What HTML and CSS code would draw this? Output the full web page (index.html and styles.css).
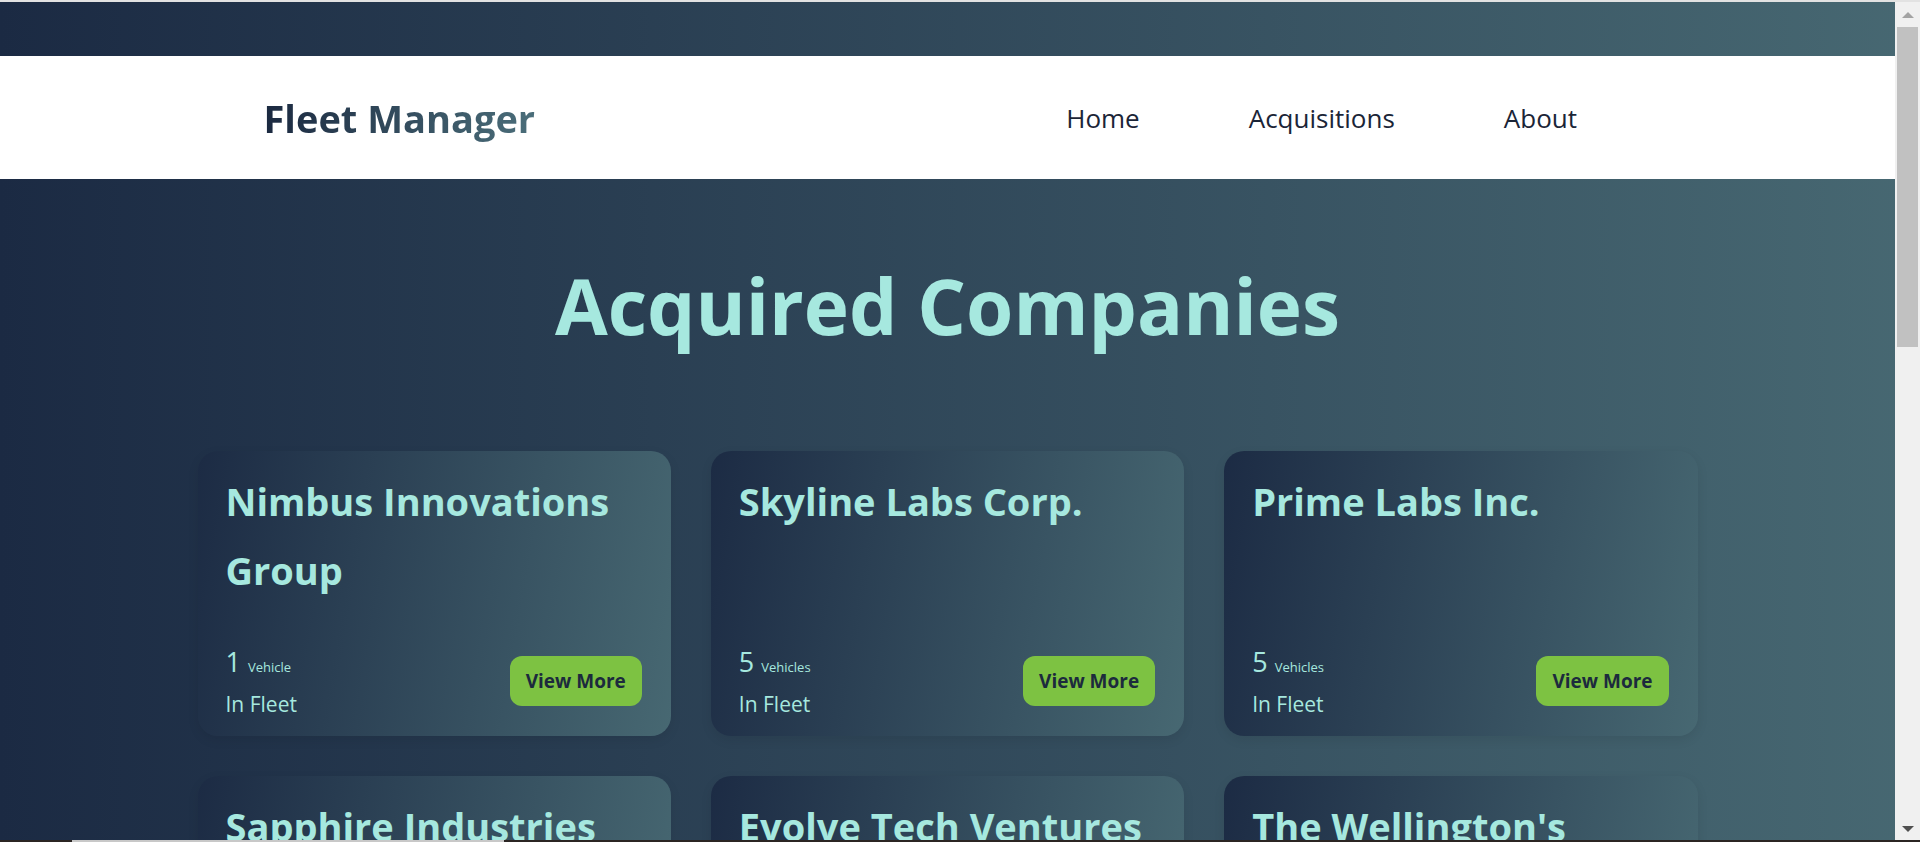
FILE: index.html
```html
<!DOCTYPE html>
<html lang="en">
<head>
<meta charset="utf-8">
<title>Fleet Manager</title>
<link rel="stylesheet" href="styles.css">
</head>
<body>
<header class="site-header">
  <nav class="navbar">
    <a class="logo" href="#">Fleet Manager</a>
    <ul class="nav-links">
      <li><a href="#">Home</a></li>
      <li><a href="#">Acquisitions</a></li>
      <li><a href="#">About</a></li>
    </ul>
  </nav>
</header>
<main class="content">
  <h1 class="page-title">Acquired Companies</h1>
  <section class="company-grid">
    <article class="company-card">
      <h2 class="company-name">Nimbus Innovations Group</h2>
      <div class="card-footer">
        <div class="fleet-info">
          <div class="fleet-count"><span class="count">1</span> <span class="unit">Vehicle</span></div>
          <div class="fleet-label">In Fleet</div>
        </div>
        <a class="btn" href="#">View More</a>
      </div>
    </article>
    <article class="company-card">
      <h2 class="company-name">Skyline Labs Corp.</h2>
      <div class="card-footer">
        <div class="fleet-info">
          <div class="fleet-count"><span class="count">5</span> <span class="unit">Vehicles</span></div>
          <div class="fleet-label">In Fleet</div>
        </div>
        <a class="btn" href="#">View More</a>
      </div>
    </article>
    <article class="company-card">
      <h2 class="company-name">Prime Labs Inc.</h2>
      <div class="card-footer">
        <div class="fleet-info">
          <div class="fleet-count"><span class="count">5</span> <span class="unit">Vehicles</span></div>
          <div class="fleet-label">In Fleet</div>
        </div>
        <a class="btn" href="#">View More</a>
      </div>
    </article>
    <article class="company-card">
      <h2 class="company-name">Sapphire Industries</h2>
      <div class="card-footer">
        <div class="fleet-info">
          <div class="fleet-count"><span class="count">3</span> <span class="unit">Vehicles</span></div>
          <div class="fleet-label">In Fleet</div>
        </div>
        <a class="btn" href="#">View More</a>
      </div>
    </article>
    <article class="company-card">
      <h2 class="company-name">Evolve Tech Ventures</h2>
      <div class="card-footer">
        <div class="fleet-info">
          <div class="fleet-count"><span class="count">2</span> <span class="unit">Vehicles</span></div>
          <div class="fleet-label">In Fleet</div>
        </div>
        <a class="btn" href="#">View More</a>
      </div>
    </article>
    <article class="company-card">
      <h2 class="company-name">The Wellington's</h2>
      <div class="card-footer">
        <div class="fleet-info">
          <div class="fleet-count"><span class="count">4</span> <span class="unit">Vehicles</span></div>
          <div class="fleet-label">In Fleet</div>
        </div>
        <a class="btn" href="#">View More</a>
      </div>
    </article>
  </section>
</main>
<div class="fake-scrollbar" aria-hidden="true">
  <span class="sb-arrow sb-up"></span>
  <span class="sb-thumb"></span>
  <span class="sb-arrow sb-down"></span>
</div>
<div class="fake-hscroll" aria-hidden="true"></div>
</body>
</html>
```

FILE: styles.css
```css
* {
  box-sizing: border-box;
}

html {
  border-top: 2px solid #e2e2e2;
}

body {
  margin: 0;
  padding: 54px 25px 0 0;
  min-height: 100vh;
  font-family: "Open Sans", "Noto Sans", sans-serif;
  background: linear-gradient(to right, #1b2a43 0%, #476872 100%);
}

.site-header {
  background: #ffffff;
}

.navbar {
  max-width: 1500px;
  height: 123px;
  margin: 0 auto;
  padding: 0 66px;
  display: flex;
  align-items: center;
  justify-content: space-between;
}

.logo {
  font-size: 38px;
  font-weight: 700;
  text-decoration: none;
  background: linear-gradient(to right, #1b2940 0%, #4b6e7a 100%);
  -webkit-background-clip: text;
  background-clip: text;
  color: transparent;
}

.nav-links {
  list-style: none;
  margin: 0;
  padding: 0;
  display: flex;
}

.nav-links a {
  display: block;
  padding: 0 54.5px;
  font-size: 26px;
  color: #1b2537;
  text-decoration: none;
}

.content {
  padding: 72px 0 80px;
}

.page-title {
  margin: 0 0 92px;
  text-align: center;
  font-size: 76.5px;
  line-height: 108px;
  font-weight: 700;
  color: #a6e8df;
}

.company-grid {
  max-width: 1500px;
  margin: 0 auto;
  display: grid;
  grid-template-columns: repeat(3, 1fr);
  gap: 40px;
}

.company-card {
  display: flex;
  flex-direction: column;
  padding: 16px 29px 17px 28px;
  border-radius: 20px;
  background: linear-gradient(100deg, #1c2b44 0%, #476872 100%);
  box-shadow: 0 4px 12px rgba(0, 0, 0, 0.08);
  color: #a6e8df;
}

.company-name {
  margin: 0;
  font-size: 38px;
  line-height: 69px;
  font-weight: 700;
  color: #a6e8df;
}

.card-footer {
  margin-top: auto;
  padding-top: 38px;
  display: flex;
  align-items: center;
  justify-content: space-between;
}

.fleet-count {
  padding-top: 4px;
  font-size: 27px;
  line-height: 30px;
}

.fleet-count .unit {
  font-size: 13px;
}

.fleet-label {
  margin-top: 7px;
  font-size: 21px;
  line-height: 30px;
}

.btn {
  display: inline-block;
  padding: 12px 16px;
  border-radius: 12px;
  background: #7dc242;
  color: #1c2a3d;
  font-size: 19px;
  line-height: 26px;
  font-weight: 700;
  text-decoration: none;
}

/* browser chrome replicas (overlay) */
.fake-scrollbar {
  position: fixed;
  top: 2px;
  right: 0;
  bottom: 2px;
  width: 25px;
  display: flex;
  flex-direction: column;
  align-items: center;
  background: #f0f0f0;
}

.sb-arrow {
  width: 0;
  height: 0;
  border-left: 6px solid transparent;
  border-right: 6px solid transparent;
}

.sb-up {
  margin-top: 10px;
  border-bottom: 6px solid #a3a3a3;
}

.sb-down {
  margin-top: auto;
  margin-bottom: 8px;
  border-top: 6px solid #505050;
}

.sb-thumb {
  width: 21px;
  height: 320px;
  margin-top: 9px;
  background: #c1c1c1;
}

.fake-hscroll {
  position: fixed;
  left: 0;
  right: 0;
  bottom: 0;
  height: 2px;
  background: linear-gradient(to right, #2b2523 72px, #c8c8c8 72px, #c8c8c8 504px, #2b2523 504px);
}
```
